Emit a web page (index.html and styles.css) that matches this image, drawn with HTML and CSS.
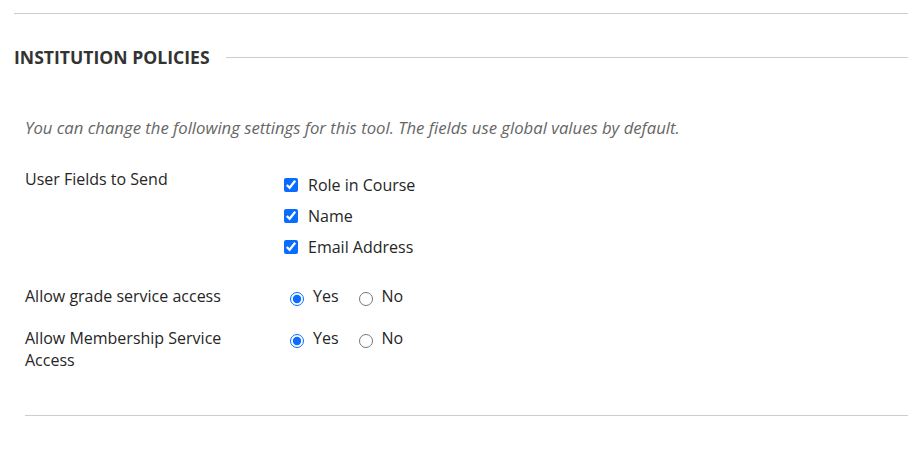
FILE: index.html
```html
<!DOCTYPE html>
<html lang="en">
<head>
    <meta charset="UTF-8">
    <meta name="viewport" content="width=device-width, initial-scale=1.0">
    <title>Tool Settings</title>
    <link rel="stylesheet" href="styles.css">
</head>
<body>

<hr class="divider top">

<section class="policies">
    <h2 class="section-title"><span>INSTITUTION POLICIES</span></h2>

    <p class="hint">You can change the following settings for this tool. The fields use global values by default.</p>

    <div class="field-row first">
        <div class="field-label">User Fields to Send</div>
        <div class="field-input checks">
            <label class="option"><input type="checkbox" checked> Role in Course</label>
            <label class="option"><input type="checkbox" checked> Name</label>
            <label class="option"><input type="checkbox" checked> Email Address</label>
        </div>
    </div>

    <div class="field-row after-checks">
        <div class="field-label">Allow grade service access</div>
        <div class="field-input radios">
            <label class="option"><input type="radio" name="grade" checked> Yes</label>
            <label class="option"><input type="radio" name="grade"> No</label>
        </div>
    </div>

    <div class="field-row">
        <div class="field-label">Allow Membership Service<br>Access</div>
        <div class="field-input radios">
            <label class="option"><input type="radio" name="membership" checked> Yes</label>
            <label class="option"><input type="radio" name="membership"> No</label>
        </div>
    </div>

    <hr class="divider bottom">
</section>

</body>
</html>
```

FILE: styles.css
```css
body {
    font-family: 'Open Sans', 'Liberation Sans', sans-serif;
    font-size: 16px;
    color: #262626;
    background-color: #fff;
    margin: 0;
    padding: 0;
}
.divider {
    border: none;
    border-top: 1px solid #cdcdcd;
    margin: 0;
}
.divider.top {
    margin: 13px 0 0 14px;
}
.divider.bottom {
    margin: 44px 0 0 11px;
}
.policies {
    padding: 0 0 0 14px;
}
.section-title {
    display: flex;
    align-items: center;
    gap: 16px;
    margin: 32px 0 0;
    font-size: 17.6px;
    font-weight: bold;
    color: #333;
    line-height: 22px;
}
.section-title::after {
    content: "";
    flex: 1;
    border-top: 1px solid #cdcdcd;
}
.hint {
    margin: 49px 0 0 11px;
    font-size: 16.7px;
    font-style: italic;
    color: #666;
    line-height: 22px;
}
.field-row {
    display: grid;
    grid-template-columns: 256px 1fr;
    align-items: start;
    margin: 20px 0 0 11px;
    line-height: 22px;
}
.field-row.first {
    margin-top: 29px;
}
.field-row.after-checks {
    margin-top: 27px;
}
.field-input {
    display: flex;
}
.checks {
    flex-direction: column;
    gap: 9px;
    padding-top: 6px;
}
.radios {
    gap: 20px;
    padding-left: 9px;
}
.option {
    display: flex;
    align-items: center;
}
.option input {
    width: 14px;
    height: 14px;
    margin: 0 10px 0 3px;
    accent-color: #0a6cff;
}
.radios .option input {
    margin: 6px 9px 0 0;
}
```
